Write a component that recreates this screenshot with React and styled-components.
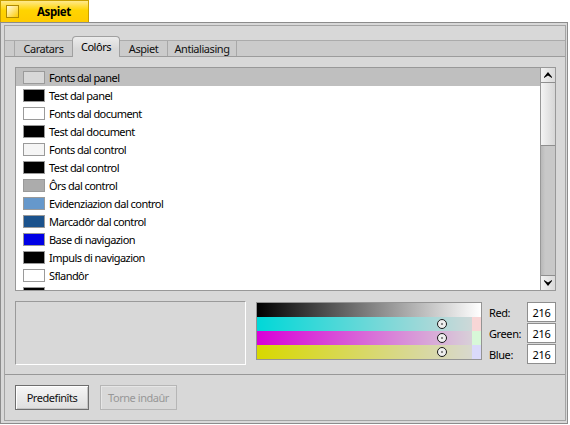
import React from 'react';
import styled, { createGlobalStyle } from 'styled-components';

const Global = createGlobalStyle`
  html, body { margin: 0; padding: 0; background: #ffffff; }
  body { font-family: "Noto Sans", "DejaVu Sans", sans-serif; font-size: 11px; color: #000; }
  * { box-sizing: border-box; }
`;

const Screen = styled.div`
  width: 570px;
  height: 425px;
  background: #ffffff;
  overflow: hidden;
`;

const TitleTab = styled.div`
  width: 89px;
  height: 22px;
  display: flex;
  align-items: center;
  padding-left: 5px;
  background: linear-gradient(#ffe98a, #ffd400 45%, #ffcb00);
  border: 1px solid #c9a000;
  border-bottom: none;
`;

const CloseBox = styled.div`
  width: 13px;
  height: 13px;
  border: 1px solid #b08a00;
  background: linear-gradient(135deg, #fffbe6 0%, #ffe680 45%, #ffcc00 100%);
`;

const TitleText = styled.span`
  margin-left: 18px;
  font-weight: bold;
  font-size: 11.5px;
  letter-spacing: -0.4px;
`;

const Frame = styled.div`
  width: 568px;
  height: 402px;
  border: 1px solid #8c8c8c;
  background: #d8d8d8;
  padding: 2px 1px 2px 3px;
`;

const Inner = styled.div`
  height: 100%;
  border: 1px solid #a4a4a4;
  display: flex;
  flex-direction: column;
`;

const TabView = styled.div`
  display: flex;
  flex-direction: column;
  border-bottom: 1px solid #989898;
`;

const TabStrip = styled.div`
  margin-top: 14px;
  height: 17px;
  display: flex;
  background: #cbcbcb;
  border-top: 1px solid #ababab;
  border-bottom: 1px solid #9c9c9c;
`;

const Tab = styled.div`
  flex: ${p => (p.$grow ? 1 : 'none')};
  width: ${p => p.$w}px;
  height: 15px;
  display: flex;
  align-items: center;
  justify-content: center;
  border-right: ${p => (p.$noline ? 'none' : '1px solid #a8a8a8')};
  color: #111;
  letter-spacing: -0.45px;
`;

const ActiveTab = styled.div`
  width: ${p => p.$w}px;
  height: 21px;
  margin-top: -5px;
  position: relative;
  z-index: 1;
  display: flex;
  align-items: center;
  justify-content: center;
  padding-bottom: 2px;
  background: linear-gradient(#ececec, #d8d8d8 60%);
  border: 1px solid #a0a0a0;
  border-bottom: none;
  border-radius: 4px 4px 0 0;
  letter-spacing: -0.45px;
`;

const Panel = styled.div`
  height: 317px;
  padding: 10px 9px 9px 10px;
  display: flex;
  flex-direction: column;
  gap: 10px;
`;

const ListBox = styled.div`
  height: 224px;
  border: 1px solid #989898;
  background: #ffffff;
  display: flex;
  overflow: hidden;
`;

const Rows = styled.div`
  flex: 1;
  overflow: hidden;
`;

const Row = styled.div`
  height: 18px;
  display: flex;
  align-items: center;
  padding-left: 7px;
  background: ${p => (p.$sel ? '#bfbfbf' : 'transparent')};
`;

const Swatch = styled.div`
  width: 22px;
  height: 13px;
  border: 1px solid #9a9a9a;
  background: ${p => p.$c};
  margin-right: 4px;
`;

const RowLabel = styled.span`
  letter-spacing: -0.55px;
  white-space: nowrap;
`;

const ScrollBar = styled.div`
  width: 15px;
  border-left: 1px solid #989898;
  display: flex;
  flex-direction: column;
  background: #c6c6c6;
`;

const ArrowBtn = styled.div`
  height: 15px;
  display: flex;
  align-items: center;
  justify-content: center;
  background: linear-gradient(90deg, #f2f2f2, #dadada);
  border-top: ${p => (p.$bottom ? '1px solid #8e8e8e' : 'none')};
  border-bottom: ${p => (p.$bottom ? 'none' : '1px solid #8e8e8e')};
`;

const Thumb = styled.div`
  height: 63px;
  background: linear-gradient(90deg, #f4f4f4, #d6d6d6);
  border-bottom: 1px solid #8e8e8e;
`;

const Track = styled.div`
  flex: 1;
  background: linear-gradient(90deg, #b8b8b8, #c8c8c8 30%);
`;

const BottomRow = styled.div`
  height: 64px;
  display: flex;
  align-items: flex-start;
`;

const Preview = styled.div`
  width: 231px;
  height: 64px;
  border: 1px solid;
  border-color: #9a9a9a #ffffff #ffffff #9a9a9a;
  background: #d8d8d8;
  margin-right: 10px;
`;

const Picker = styled.div`
  width: 226px;
  margin-top: 1px;
  border: 1px solid #949494;
  display: flex;
  flex-direction: column;
  margin-right: 7px;
`;

const Ramp = styled.div`
  height: 14px;
  position: relative;
  background: ${p => p.$bg};
`;

const Knob = styled.div`
  position: absolute;
  top: 2px;
  width: 10px;
  height: 10px;
  margin-left: -5px;
  border-radius: 50%;
  border: 1px solid #1a1a1a;
  background: radial-gradient(circle, #8a8a8a 0 1px, #efefef 1.6px);
`;

const Fields = styled.div`
  flex: 1;
  display: grid;
  grid-template-columns: 1fr 29px;
  grid-auto-rows: 20px;
  row-gap: 1px;
  align-items: center;
  margin-top: 1px;
`;

const FieldLabel = styled.span`
  letter-spacing: -0.4px;
`;

const NumBox = styled.div`
  height: 20px;
  border: 1px solid #8e8e8e;
  background: #ffffff;
  display: flex;
  align-items: center;
  justify-content: center;
  letter-spacing: -0.3px;
`;

const ButtonBar = styled.div`
  flex: 1;
  display: flex;
  gap: 11px;
  padding: 10px 0 0 10px;
`;

const Button = styled.div`
  width: ${p => p.$w}px;
  height: 25px;
  display: flex;
  align-items: center;
  justify-content: center;
  letter-spacing: -0.45px;
  border: 1px solid ${p => (p.$disabled ? '#b6b6b6' : '#6e6e6e')};
  color: ${p => (p.$disabled ? '#979797' : '#111')};
  background: ${p => (p.$disabled ? '#d8d8d8' : 'linear-gradient(#f6f6f6, #dedede)')};
  box-shadow: ${p => (p.$disabled ? 'inset 1px 1px 0 #e6e6e6' : 'inset 1px 1px 0 #ffffff, inset -1px -1px 0 #c4c4c4')};
`;

const Arrow = ({ down }) => (
  <svg width="8" height="6" viewBox="0 0 8 6" style={down ? { transform: 'rotate(180deg)' } : undefined}>
    <path d="M4 0 L8 5 L8 6 L4 3.6 L0 6 L0 5 Z" fill="#000" />
  </svg>
);

const items = [
  ['Fonts dal panel', '#d8d8d8'],
  ['Test dal panel', '#000000'],
  ['Fonts dal document', '#ffffff'],
  ['Test dal document', '#000000'],
  ['Fonts dal control', '#f5f5f5'],
  ['Test dal control', '#000000'],
  ['Ôrs dal control', '#acacac'],
  ['Evidenziazion dal control', '#6698cb'],
  ['Marcadôr dal control', '#1b528c'],
  ['Base di navigazion', '#0000e5'],
  ['Impuls di navigazion', '#000000'],
  ['Sflandôr', '#ffffff'],
  ['', '#000000'],
];

const ramps = [
  { bg: 'linear-gradient(90deg, #000000, #ffffff)', knob: false },
  { bg: 'linear-gradient(90deg, rgb(0,216,216) 0%, rgb(206,216,216) 96%, rgb(248,214,214) 96%)', knob: true },
  { bg: 'linear-gradient(90deg, rgb(216,0,216) 0%, rgb(216,208,216) 96%, rgb(216,248,216) 96%)', knob: true },
  { bg: 'linear-gradient(90deg, rgb(216,216,0) 0%, rgb(216,216,206) 96%, rgb(218,218,250) 96%)', knob: true },
];

export default function App() {
  return (
    <Screen>
      <Global />
      <TitleTab>
        <CloseBox />
        <TitleText>Aspiet</TitleText>
      </TitleTab>
      <Frame>
        <Inner>
          <TabView>
            <TabStrip>
              <Tab $w={10} />
              <Tab $w={57} $noline>Caratars</Tab>
              <ActiveTab $w={48}>Colôrs</ActiveTab>
              <Tab $w={48}>Aspiet</Tab>
              <Tab $w={69}>Antialiasing</Tab>
              <Tab $grow $noline />
            </TabStrip>
            <Panel>
              <ListBox>
                <Rows>
                  {items.map(([label, c], i) => (
                    <Row key={i} $sel={i === 0}>
                      <Swatch $c={c} />
                      {label && <RowLabel>{label}</RowLabel>}
                    </Row>
                  ))}
                </Rows>
                <ScrollBar>
                  <ArrowBtn><Arrow /></ArrowBtn>
                  <Thumb />
                  <Track />
                  <ArrowBtn $bottom><Arrow down /></ArrowBtn>
                </ScrollBar>
              </ListBox>
              <BottomRow>
                <Preview />
                <Picker>
                  {ramps.map((r, i) => (
                    <Ramp key={i} $bg={r.bg}>
                      {r.knob && <Knob style={{ left: `${(216 / 255) * 97.5}%` }} />}
                    </Ramp>
                  ))}
                </Picker>
                <Fields>
                  <FieldLabel>Red:</FieldLabel>
                  <NumBox>216</NumBox>
                  <FieldLabel>Green:</FieldLabel>
                  <NumBox>216</NumBox>
                  <FieldLabel>Blue:</FieldLabel>
                  <NumBox>216</NumBox>
                </Fields>
              </BottomRow>
            </Panel>
          </TabView>
          <ButtonBar>
            <Button $w={74}>Predefinîts</Button>
            <Button $w={77} $disabled>Torne indaûr</Button>
          </ButtonBar>
        </Inner>
      </Frame>
    </Screen>
  );
}
